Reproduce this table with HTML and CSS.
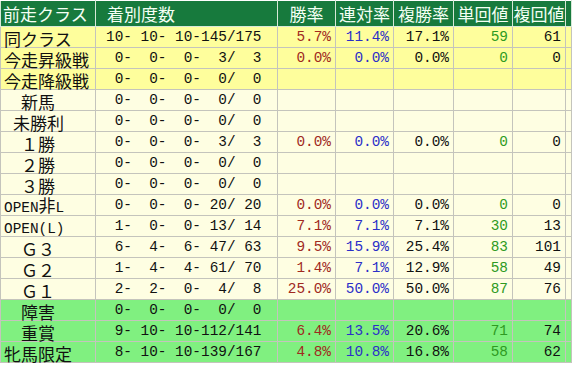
FILE: index.html
```html
<!DOCTYPE html>
<html lang="ja">
<head>
<meta charset="utf-8">
<title>前走クラス別成績</title>
<link rel="stylesheet" href="styles.css">
</head>
<body>
<table class="stats">
  <colgroup>
    <col class="w-cls"><col class="w-cnt"><col class="w-rate"><col class="w-rate"><col class="w-rate3"><col class="w-val"><col class="w-val2"><col class="w-edge">
  </colgroup>
  <thead>
    <tr>
      <th class="h-cls">前走クラス</th>
      <th class="h-cnt">着別度数</th>
      <th>勝率</th>
      <th>連対率</th>
      <th>複勝率</th>
      <th>単回値</th>
      <th>複回値</th>
      <th class="edge"></th>
    </tr>
  </thead>
  <tbody>
    <tr class="yel"><td class="lbl">同クラス</td><td class="cnt">10- 10- 10-145/175</td><td class="num win">5.7%</td><td class="num ren">11.4%</td><td class="num">17.1%</td><td class="num tan">59</td><td class="num">61</td><td class="edge"></td></tr>
    <tr class="yel"><td class="lbl">今走昇級戦</td><td class="cnt"> 0-  0-  0-  3/  3</td><td class="num win">0.0%</td><td class="num ren">0.0%</td><td class="num">0.0%</td><td class="num tan">0</td><td class="num">0</td><td class="edge"></td></tr>
    <tr class="yel"><td class="lbl">今走降級戦</td><td class="cnt"> 0-  0-  0-  0/  0</td><td></td><td></td><td></td><td></td><td></td><td class="edge"></td></tr>
    <tr class="crm"><td class="lbl ind">新馬</td><td class="cnt"> 0-  0-  0-  0/  0</td><td></td><td></td><td></td><td></td><td></td><td class="edge"></td></tr>
    <tr class="crm"><td class="lbl ind-h">未勝利</td><td class="cnt"> 0-  0-  0-  0/  0</td><td></td><td></td><td></td><td></td><td></td><td class="edge"></td></tr>
    <tr class="crm"><td class="lbl ind">１勝</td><td class="cnt"> 0-  0-  0-  3/  3</td><td class="num win">0.0%</td><td class="num ren">0.0%</td><td class="num">0.0%</td><td class="num tan">0</td><td class="num">0</td><td class="edge"></td></tr>
    <tr class="crm"><td class="lbl ind">２勝</td><td class="cnt"> 0-  0-  0-  0/  0</td><td></td><td></td><td></td><td></td><td></td><td class="edge"></td></tr>
    <tr class="crm"><td class="lbl ind">３勝</td><td class="cnt"> 0-  0-  0-  0/  0</td><td></td><td></td><td></td><td></td><td></td><td class="edge"></td></tr>
    <tr class="crm"><td class="lbl"><span class="lat">OPEN</span>非<span class="lat">L</span></td><td class="cnt"> 0-  0-  0- 20/ 20</td><td class="num win">0.0%</td><td class="num ren">0.0%</td><td class="num">0.0%</td><td class="num tan">0</td><td class="num">0</td><td class="edge"></td></tr>
    <tr class="crm"><td class="lbl"><span class="lat">OPEN(L)</span></td><td class="cnt"> 1-  0-  0- 13/ 14</td><td class="num win">7.1%</td><td class="num ren">7.1%</td><td class="num">7.1%</td><td class="num tan">30</td><td class="num">13</td><td class="edge"></td></tr>
    <tr class="crm"><td class="lbl ind">Ｇ３</td><td class="cnt"> 6-  4-  6- 47/ 63</td><td class="num win">9.5%</td><td class="num ren">15.9%</td><td class="num">25.4%</td><td class="num tan">83</td><td class="num">101</td><td class="edge"></td></tr>
    <tr class="crm"><td class="lbl ind">Ｇ２</td><td class="cnt"> 1-  4-  4- 61/ 70</td><td class="num win">1.4%</td><td class="num ren">7.1%</td><td class="num">12.9%</td><td class="num tan">58</td><td class="num">49</td><td class="edge"></td></tr>
    <tr class="crm"><td class="lbl ind">Ｇ１</td><td class="cnt"> 2-  2-  0-  4/  8</td><td class="num win">25.0%</td><td class="num ren">50.0%</td><td class="num">50.0%</td><td class="num tan">87</td><td class="num">76</td><td class="edge"></td></tr>
    <tr class="grn"><td class="lbl ind">障害</td><td class="cnt"> 0-  0-  0-  0/  0</td><td></td><td></td><td></td><td></td><td></td><td class="edge"></td></tr>
    <tr class="grn"><td class="lbl ind">重賞</td><td class="cnt"> 9- 10- 10-112/141</td><td class="num win">6.4%</td><td class="num ren">13.5%</td><td class="num">20.6%</td><td class="num tan">71</td><td class="num">74</td><td class="edge"></td></tr>
    <tr class="grn"><td class="lbl">牝馬限定</td><td class="cnt"> 8- 10- 10-139/167</td><td class="num win">4.8%</td><td class="num ren">10.8%</td><td class="num">16.8%</td><td class="num tan">58</td><td class="num">62</td><td class="edge"></td></tr>
  </tbody>
</table>
</body>
</html>
```

FILE: styles.css
```css
html, body {
  margin: 0;
  padding: 0;
  background: #ffffff;
  overflow: hidden;
}

.stats {
  border-collapse: collapse;
  table-layout: fixed;
  width: 571px;
  font-family: "Liberation Mono", "Noto Sans CJK JP", monospace;
  font-size: 14.4px;
  color: #111111;
}

.w-cls { width: 95px; }
.w-cnt { width: 182px; }
.w-rate { width: 58px; }
.w-rate3 { width: 60px; }
.w-val { width: 59px; }
.w-val2 { width: 53px; }
.w-edge { width: 6px; }

.stats th,
.stats td {
  border: 1px solid #c4c4bc;
  padding: 0;
  white-space: pre;
  vertical-align: middle;
}

.stats th {
  height: 25px;
  background: #177a3d;
  color: #f4fff4;
  font-family: "Noto Sans CJK JP", sans-serif;
  font-weight: 400;
  font-size: 17px;
  line-height: 18px;
  text-align: center;
  border-color: #d8e8d8;
  border-top-color: #ffffff;
}

.stats th.h-cls {
  text-align: left;
  padding-left: 2px;
}

.stats th.h-cnt {
  text-align: left;
  padding-left: 11px;
}

.stats td {
  height: 20px;
  line-height: 18px;
}

.yel td { background: #fefe9c; }
.crm td { background: #fefee2; }
.grn td { background: #80f080; }

.stats td.lbl {
  vertical-align: bottom;
  line-height: 16px;
  font-family: "Noto Sans CJK JP", sans-serif;
  font-size: 17px;
  padding-left: 3px;
}

.stats td.ind { padding-left: 20px; }
.stats td.ind-h { padding-left: 12px; }

.lat {
  font-family: "Liberation Mono", monospace;
  font-size: 14.4px;
  line-height: 1;
}

.stats td.cnt {
  padding-left: 10px;
}

.stats td.num {
  text-align: right;
  padding-right: 4px;
}

.stats td.edge,
.stats th.edge {
  overflow: hidden;
}

.win { color: #a02a1e; }
.ren { color: #2b2fc8; }
.tan { color: #2e9a22; }
```
